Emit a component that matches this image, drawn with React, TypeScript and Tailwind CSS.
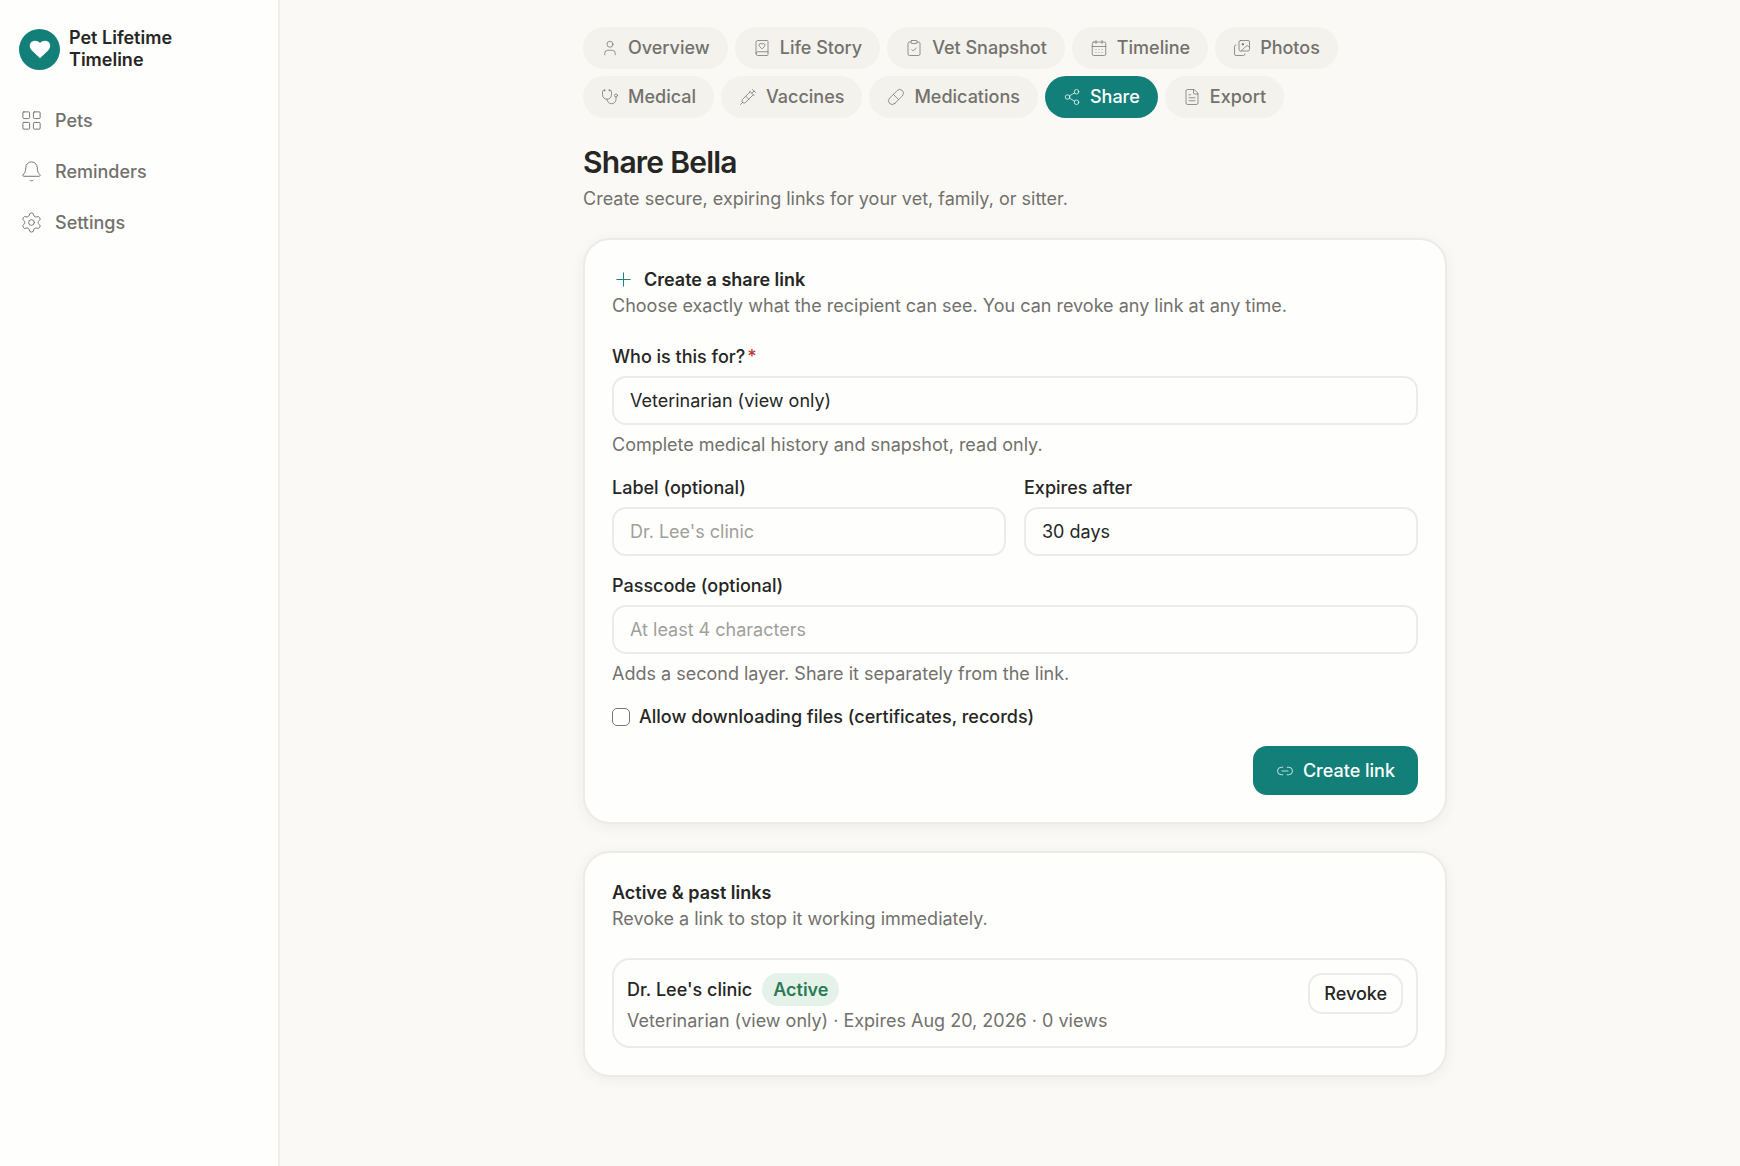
import React, { useState } from "react";
import {
    Bell,
    BookHeart,
    CalendarDays,
    ClipboardCheck,
    FileText,
    Images,
    LayoutGrid,
    Link2,
    Pill,
    Plus,
    Settings,
    Share2,
    Stethoscope,
    Syringe,
    User,
} from "lucide-react";

const navItems = [
    { label: "Pets", icon: LayoutGrid },
    { label: "Reminders", icon: Bell },
    { label: "Settings", icon: Settings },
];

const tabs = [
    { label: "Overview", icon: User },
    { label: "Life Story", icon: BookHeart },
    { label: "Vet Snapshot", icon: ClipboardCheck },
    { label: "Timeline", icon: CalendarDays },
    { label: "Photos", icon: Images },
    { label: "Medical", icon: Stethoscope },
    { label: "Vaccines", icon: Syringe },
    { label: "Medications", icon: Pill },
    { label: "Share", icon: Share2 },
    { label: "Export", icon: FileText },
];

const controlClass =
    "h-[49px] w-full appearance-none rounded-[14px] border-2 border-[#ebebe8] bg-[#fefefd] px-4 text-lg text-[#262624] placeholder:text-[#a09f9b] focus:outline-none focus:border-[#137f79]";

function Sidebar() {
    return (
        <aside className="w-[280px] shrink-0 border-r-2 border-[#f0efec] bg-[#fefefd] px-[19px] pt-[27px]">
            <a href="#home" className="flex items-center gap-[9px]">
                <span className="flex size-[41px] shrink-0 items-center justify-center rounded-full bg-[#137f79]">
                    <svg viewBox="0 0 24 24" className="size-6 fill-white" aria-hidden="true">
                        <path d="M12 21.3 3.9 13.4C.9 10.400 1.300 6.600 3.700 4.800 6.300 2.900 9.800 3.600 12 6.100c2.200-2.500 5.700-3.200 8.300-1.300 2.400 1.800 2.800 5.600-.2 8.600z" />
                    </svg>
                </span>
                <span className="w-32 text-lg leading-[22px] font-semibold text-[#262624]">
                    Pet Lifetime Timeline
                </span>
            </a>

            <nav className="mt-[27px] flex flex-col gap-1.5 pl-px">
                {navItems.map(({ label, icon: Icon }) => (
                    <a key={label} href={`#${label.toLowerCase()}`} className="flex h-[45px] items-center gap-3 text-lg font-medium text-[#72716c]">
                        <Icon size={23} strokeWidth={1} />
                        {label}
                    </a>
                ))}
            </nav>
        </aside>
    );
}

function PetTabs() {
    return (
        <nav className="flex flex-wrap gap-[7px]">
            {tabs.map(({ label, icon: Icon }) => (
                <a
                    key={label}
                    href={`#${label.toLowerCase().replace(" ", "-")}`}
                    className={`flex h-[42px] items-center gap-[9px] rounded-full px-[18px] text-lg font-medium ${
                        label === "Share" ? "bg-[#137f79] text-white" : "bg-[#f4f2ed] text-[#72716c]"
                    }`}
                >
                    <Icon size={18} strokeWidth={1} />
                    {label}
                </a>
            ))}
        </nav>
    );
}

function Card({ children }: { children: React.ReactNode }) {
    return (
        <section className="mt-[27px] rounded-[27px] border-2 border-[#ebebe8] bg-[#fefefd] p-[27px] shadow-[0_3px_14px_rgba(60,55,40,0.06)]">
            {children}
        </section>
    );
}

function CreateLinkCard() {
    const [allowDownload, setAllowDownload] = useState(false);

    return (
        <Card>
            <h2 className="flex items-center gap-[9px] text-lg leading-[25px] font-semibold">
                <Plus size={23} strokeWidth={1} className="text-[#137f79]" />
                Create a share link
            </h2>
            <p className="text-lg leading-7 text-[#72716c]">
                Choose exactly what the recipient can see. You can revoke any link at any time.
            </p>

            <form className="mt-[25px] flex flex-col gap-[18px]" onSubmit={(e) => e.preventDefault()}>
                <div className="flex flex-col gap-[7px]">
                    <label htmlFor="role" className="text-lg leading-6 font-medium">
                        Who is this for?<span className="ml-0.5 text-[#c0392f]">*</span>
                    </label>
                    <select id="role" className={controlClass}>
                        <option>Veterinarian (view only)</option>
                    </select>
                    <p className="text-lg leading-[26px] text-[#72716c]">Complete medical history and snapshot, read only.</p>
                </div>

                <div className="grid grid-cols-2 gap-[18px]">
                    <div className="flex flex-col gap-[7px]">
                        <label htmlFor="label" className="text-lg leading-6 font-medium">Label (optional)</label>
                        <input id="label" type="text" placeholder="Dr. Lee's clinic" className={controlClass} />
                    </div>
                    <div className="flex flex-col gap-[7px]">
                        <label htmlFor="expires" className="text-lg leading-6 font-medium">Expires after</label>
                        <select id="expires" className={controlClass}>
                            <option>30 days</option>
                        </select>
                    </div>
                </div>

                <div className="flex flex-col gap-[7px]">
                    <label htmlFor="passcode" className="text-lg leading-6 font-medium">Passcode (optional)</label>
                    <input id="passcode" type="text" placeholder="At least 4 characters" className={controlClass} />
                    <p className="text-lg leading-[26px] text-[#72716c]">Adds a second layer. Share it separately from the link.</p>
                </div>

                <label className="flex items-center gap-[9px] text-lg leading-[23px] font-medium">
                    <input
                        type="checkbox"
                        checked={allowDownload}
                        onChange={(e) => setAllowDownload(e.target.checked)}
                        className="size-[18px] appearance-none rounded-[5px] border border-[#767676] bg-white checked:bg-[#137f79]"
                    />
                    Allow downloading files (certificates, records)
                </label>

                <button type="submit" className="flex h-[49px] items-center gap-[9px] self-end rounded-[14px] bg-[#137f79] px-[23px] text-lg font-medium text-white">
                    <Link2 size={18} strokeWidth={1} />
                    Create link
                </button>
            </form>
        </Card>
    );
}

function LinksCard() {
    return (
        <Card>
            <h2 className="text-lg leading-[25px] font-semibold">Active &amp; past links</h2>
            <p className="text-lg leading-7 text-[#72716c]">Revoke a link to stop it working immediately.</p>

            <ul className="mt-[25px]">
                <li className="flex items-start justify-between rounded-[18px] border-2 border-[#ebebe8] p-[13px]">
                    <div className="flex flex-col gap-[3px]">
                        <div className="flex items-center gap-2.5">
                            <span className="text-lg font-medium">Dr. Lee's clinic</span>
                            <span className="rounded-full bg-[#e4f2ea] px-[11px] text-lg leading-[33px] font-semibold text-[#2c7a55]">
                                Active
                            </span>
                        </div>
                        <p className="text-lg leading-6 text-[#72716c]">
                            Veterinarian (view only) · Expires Aug 20, 2026 · 0 views
                        </p>
                    </div>
                    <button type="button" className="h-[41px] rounded-[14px] border-2 border-[#ebebe8] px-3.5 text-lg font-medium">
                        Revoke
                    </button>
                </li>
            </ul>
        </Card>
    );
}

export default function App() {
    return (
        <div className="flex min-h-screen bg-[#faf9f5] font-['Inter',sans-serif] text-[#262624] antialiased">
            <Sidebar />
            <main className="min-w-0 flex-1 pt-[27px] pr-9 pb-16 pl-[46px]">
                <div className="mx-auto max-w-[864px]">
                    <PetTabs />
                    <h1 className="mt-[26px] text-3xl leading-9 font-semibold tracking-tight">Share Bella</h1>
                    <p className="mt-[7px] text-lg leading-6 text-[#72716c]">
                        Create secure, expiring links for your vet, family, or sitter.
                    </p>
                    <CreateLinkCard />
                    <LinksCard />
                </div>
            </main>
        </div>
    );
}
